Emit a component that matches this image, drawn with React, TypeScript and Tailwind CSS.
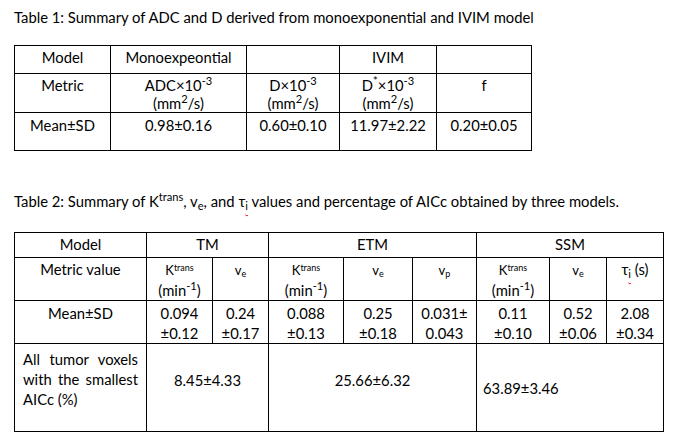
import React from 'react'

const cell = 'border border-black align-top text-center px-1'

function Ktrans() {
  return (
    <>
      <span className="text-[13px]">K</span>
      <sup className="text-[9px]">trans</sup>
    </>
  )
}

function Ve({ sub = 'e' }: { sub?: string }) {
  return (
    <span className="text-[13px]">
      v<sub className="text-[9px]">{sub}</sub>
    </span>
  )
}

function Squiggle({ children }: { children: React.ReactNode }) {
  return <span className="underline decoration-wavy decoration-red-600 decoration-1 underline-offset-2">{children}</span>
}

export default function App() {
  return (
    <div
      className="min-h-[435px] w-[674px] bg-white text-black text-[14.8px] leading-[19px]"
      style={{ fontFamily: 'Lato, "Liberation Sans", sans-serif' }}
    >
      <p className="pl-[14px] pt-[8px]">
        Table 1: Summary of ADC and D derived from monoexponential and IVIM model
      </p>

      <table className="ml-[14px] mt-[18px] table-fixed border-collapse">
        <colgroup>
          <col className="w-[96px]" />
          <col className="w-[136px]" />
          <col className="w-[93px]" />
          <col className="w-[97px]" />
          <col className="w-[95px]" />
        </colgroup>
        <tbody>
          <tr className="h-[28px]">
            <td className={`${cell} pt-[2px]`}>Model</td>
            <td className={`${cell} pt-[2px]`}>Monoexpeontial</td>
            <td className={cell}></td>
            <td className={`${cell} pt-[2px]`}>IVIM</td>
            <td className={cell}></td>
          </tr>
          <tr className="h-[39px] leading-[18px]">
            <td className={`${cell} pt-[2px]`}>Metric</td>
            <td className={`${cell} pt-[2px]`}>
              ADC×10<sup>-3</sup>
              <br />
              (mm<sup>2</sup>/s)
            </td>
            <td className={`${cell} pt-[2px]`}>
              D×10<sup>-3</sup>
              <br />
              (mm<sup>2</sup>/s)
            </td>
            <td className={`${cell} pt-[2px]`}>
              D<sup>*</sup>×10<sup>-3</sup>
              <br />
              (mm<sup>2</sup>/s)
            </td>
            <td className={`${cell} pt-[2px]`}>f</td>
          </tr>
          <tr className="h-[38px]">
            <td className={`${cell} pt-[3px]`}>Mean±SD</td>
            <td className={`${cell} pt-[3px]`}>0.98±0.16</td>
            <td className={`${cell} pt-[3px]`}>0.60±0.10</td>
            <td className={`${cell} pt-[3px]`}>11.97±2.22</td>
            <td className={`${cell} pt-[3px]`}>0.20±0.05</td>
          </tr>
        </tbody>
      </table>

      <p className="pl-[14px] pt-[41px]">
        Table 2: Summary of K<sup>trans</sup>, v<sub>e</sub>, and τ
        <sub>
          <Squiggle>i</Squiggle>
        </sub>{' '}
        values and percentage of AICc obtained by three models.
      </p>

      <table className="ml-[14px] mt-[21px] table-fixed border-collapse leading-[20px]">
        <colgroup>
          <col className="w-[132px]" />
          <col className="w-[66px]" />
          <col className="w-[56px]" />
          <col className="w-[75px]" />
          <col className="w-[69px]" />
          <col className="w-[64px]" />
          <col className="w-[73px]" />
          <col className="w-[57px]" />
          <col className="w-[57px]" />
        </colgroup>
        <tbody>
          <tr className="h-[25px]">
            <td className={`${cell} pt-[1px]`}>Model</td>
            <td className={`${cell} pt-[1px]`} colSpan={2}>TM</td>
            <td className={`${cell} pt-[1px]`} colSpan={3}>ETM</td>
            <td className={`${cell} pt-[1px]`} colSpan={3}>SSM</td>
          </tr>
          <tr className="h-[40px]">
            <td className={`${cell} pt-[1px]`}>Metric value</td>
            <td className={`${cell} pt-[1px]`}>
              <Ktrans />
              <br />
              (min<sup>-1</sup>)
            </td>
            <td className={`${cell} pt-[1px]`}>
              <Ve />
            </td>
            <td className={`${cell} pt-[1px]`}>
              <Ktrans />
              <br />
              (min<sup>-1</sup>)
            </td>
            <td className={`${cell} pt-[1px]`}>
              <Ve />
            </td>
            <td className={`${cell} pt-[1px]`}>
              <Ve sub="p" />
            </td>
            <td className={`${cell} pt-[1px]`}>
              <Ktrans />
              <br />
              (min<sup>-1</sup>)
            </td>
            <td className={`${cell} pt-[1px]`}>
              <Ve />
            </td>
            <td className={`${cell} pt-[1px]`}>
              τ
              <sub>
                <Squiggle>i</Squiggle>
              </sub>{' '}
              (s)
            </td>
          </tr>
          <tr className="h-[43px]">
            <td className={`${cell} pt-[2px]`}>Mean±SD</td>
            <td className={`${cell} pt-[2px]`}>
              0.094
              <br />
              ±0.12
            </td>
            <td className={`${cell} pt-[2px]`}>
              0.24
              <br />
              ±0.17
            </td>
            <td className={`${cell} pt-[2px]`}>
              0.088
              <br />
              ±0.13
            </td>
            <td className={`${cell} pt-[2px]`}>
              0.25
              <br />
              ±0.18
            </td>
            <td className={`${cell} pt-[2px]`}>
              0.031±
              <br />
              0.043
            </td>
            <td className={`${cell} pt-[2px]`}>
              0.11
              <br />
              ±0.10
            </td>
            <td className={`${cell} pt-[2px]`}>
              0.52
              <br />
              ±0.06
            </td>
            <td className={`${cell} pt-[2px]`}>
              2.08
              <br />
              ±0.34
            </td>
          </tr>
          <tr className="h-[88px]">
            <td className="border border-black align-top px-[8px] pt-[5px] text-justify [text-align-last:left]">
              All tumor voxels with the smallest AICc (%)
            </td>
            <td className={`${cell} pt-[26px]`} colSpan={2}>8.45±4.33</td>
            <td className={`${cell} pt-[26px]`} colSpan={3}>25.66±6.32</td>
            <td className="border border-black align-middle px-[6px] text-left" colSpan={3}>
              63.89±3.46
            </td>
          </tr>
        </tbody>
      </table>
    </div>
  )
}
